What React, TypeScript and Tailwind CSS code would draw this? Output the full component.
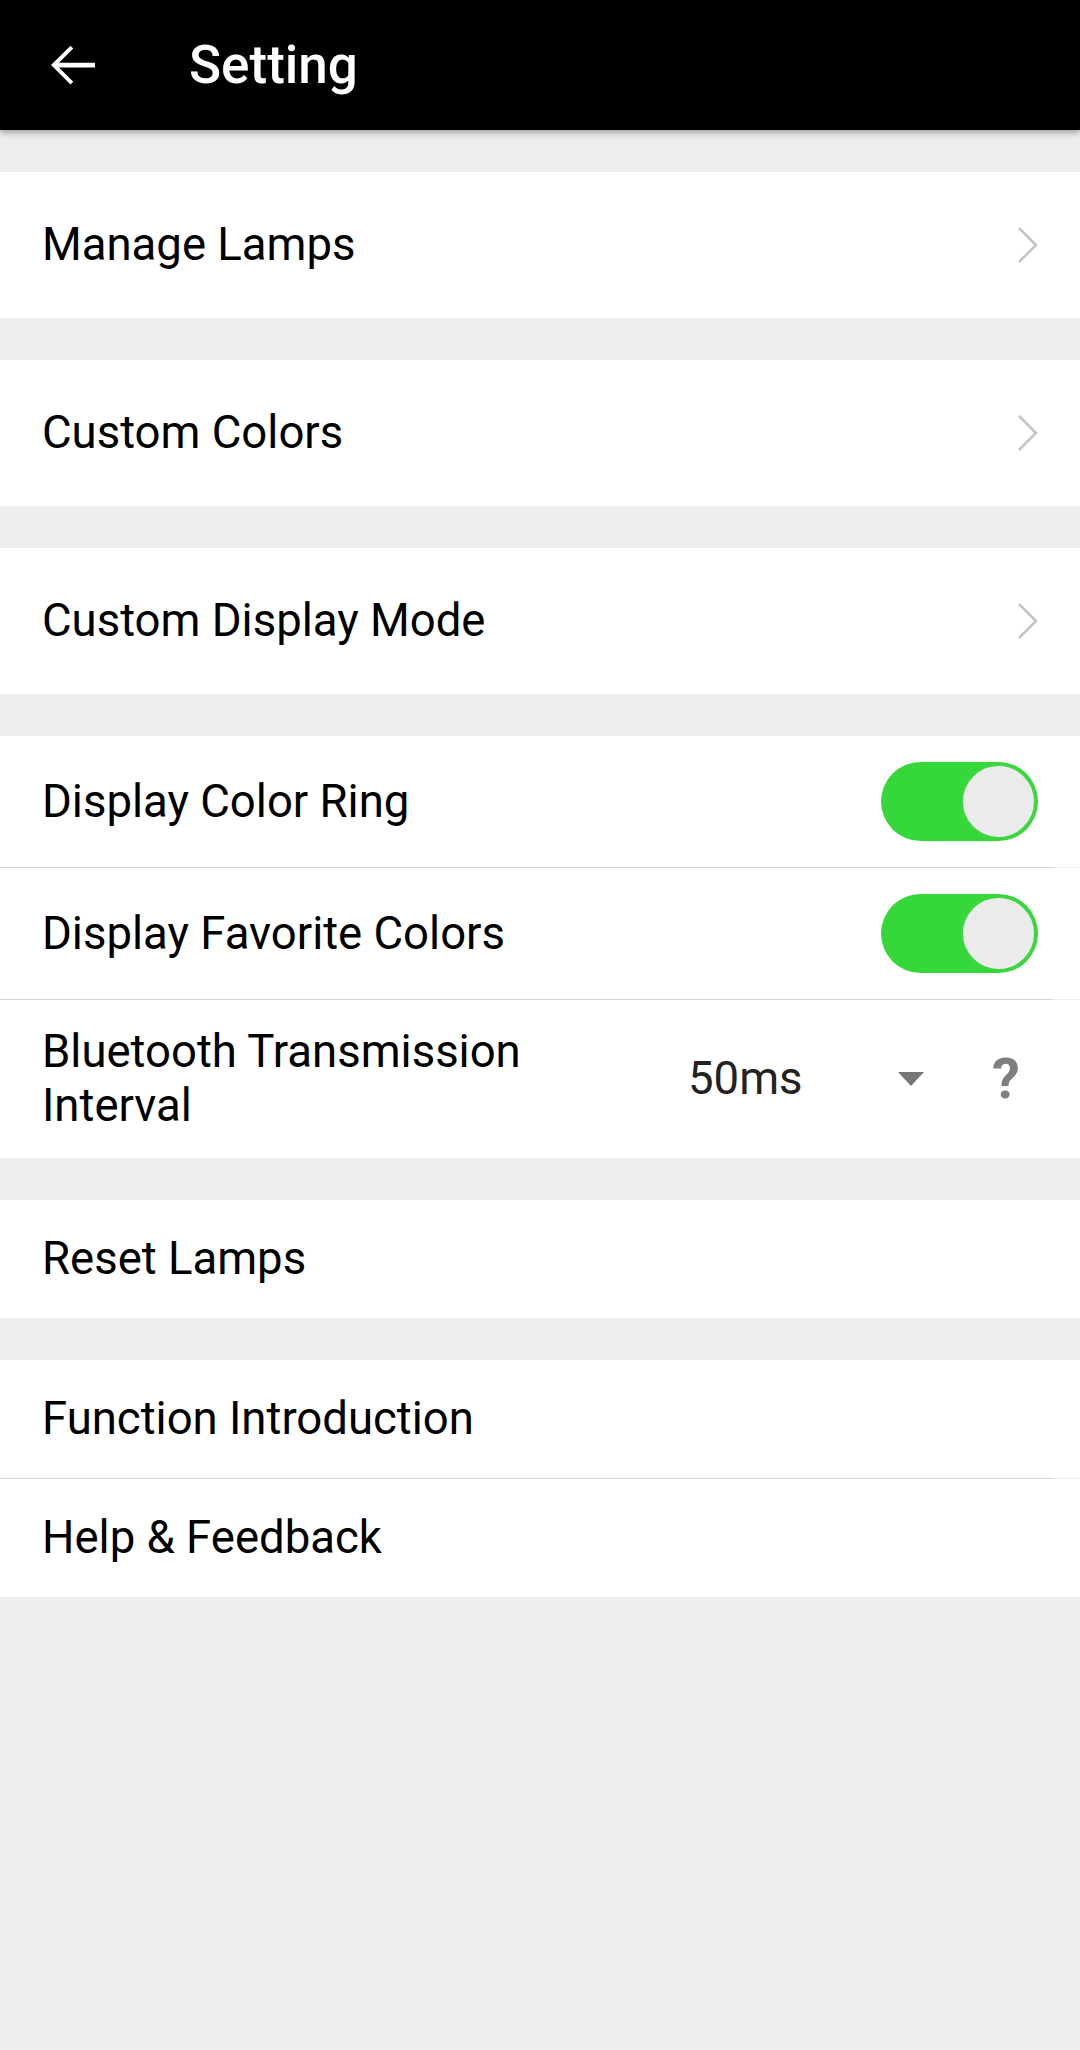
// settings screen
const font = { fontFamily: "Roboto, 'Noto Sans', sans-serif" };

const Chevron = () => (
  <svg width="22" height="38" viewBox="0 0 22 38" className="shrink-0">
    <path d="M2 2 L19 19 L2 36" fill="none" stroke="#c4c4c4" strokeWidth="2.5" />
  </svg>
);

const Toggle = () => (
  <div className="w-[157px] h-[79px] rounded-full bg-[#36d73a] flex items-center justify-end pr-[2px]">
    <div className="w-[75px] h-[75px] rounded-full bg-[#ebebeb] border-2 border-[#3ed742]" />
  </div>
);

const Divider = () => <div className="h-px bg-[#d4d4d4] mr-[27px]" />;

const NavRow = ({ label }: { label: string }) => (
  <div className="h-[146px] bg-white flex items-center justify-between pl-[42px] pr-[41px]">
    <span className="text-[45.5px] text-black leading-none">{label}</span>
    <Chevron />
  </div>
);

const ToggleRow = ({ label }: { label: string }) => (
  <div className="h-[131px] bg-white flex items-center justify-between pl-[42px] pr-[42px]">
    <span className="text-[45.5px] text-black leading-none">{label}</span>
    <Toggle />
  </div>
);

const TextRow = ({ label }: { label: string }) => (
  <div className="h-[118px] bg-white flex items-center pl-[42px]">
    <span className="text-[45.5px] text-black leading-none">{label}</span>
  </div>
);

export default function App() {
  return (
    <div className="w-[1080px] min-h-[2050px] bg-[#ededed]" style={font}>
      {/* header */}
      <div className="h-[130px] bg-black flex items-center shadow-[0_3px_6px_rgba(0,0,0,0.3)] relative">
        <div className="w-[189px] flex items-center pl-[51px]">
          <svg width="44" height="44" viewBox="4 4 16 16">
            <path
              d="M20 11.2H6.9l5.2-5.2-1-1L4 12l7.1 7.1 1-1-5.2-5.2H20z"
              fill="#fff"
            />
          </svg>
        </div>
        <span className="text-white text-[53px] font-medium leading-none">Setting</span>
      </div>

      <div className="h-[42px]" />
      <NavRow label="Manage Lamps" />
      <div className="h-[42px]" />
      <NavRow label="Custom Colors" />
      <div className="h-[42px]" />
      <NavRow label="Custom Display Mode" />
      <div className="h-[42px]" />

      <ToggleRow label="Display Color Ring" />
      <Divider />
      <ToggleRow label="Display Favorite Colors" />
      <Divider />
      <div className="h-[158px] bg-white flex items-center pl-[42px]">
        <div className="w-[600px] shrink-0 text-[45.5px] leading-[54px] text-black">
          Bluetooth Transmission Interval
        </div>
        <div className="ml-[46px] w-[236px] flex items-center justify-between">
          <span className="text-[45.5px] leading-none text-[#222]">50ms</span>
          <svg width="26" height="14" viewBox="0 0 26 14">
            <path d="M0 0 H26 L13 14 Z" fill="#777" />
          </svg>
        </div>
        <span className="ml-[68px] text-[56px] font-bold leading-none text-[#7f7f7f]">?</span>
      </div>

      <div className="h-[42px]" />
      <TextRow label="Reset Lamps" />
      <div className="h-[42px]" />
      <TextRow label="Function Introduction" />
      <Divider />
      <TextRow label="Help & Feedback" />
    </div>
  );
}
